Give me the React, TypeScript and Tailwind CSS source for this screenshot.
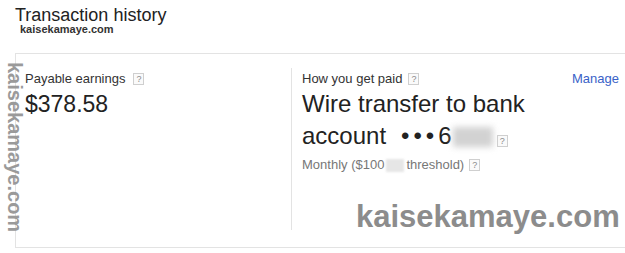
import React from "react";

function Q({ className = "" }: { className?: string }) {
  return (
    <span
      className={
        "inline-flex w-[11px] h-[12px] border border-[#cfcfcf] bg-[#fafafa] text-[9px] leading-none text-[#8a8a8a] items-center justify-center " +
        className
      }
    >
      ?
    </span>
  );
}

export default function App() {
  return (
    <div className="relative w-[625px] h-[253px] overflow-hidden bg-white font-['Liberation_Sans',Arial,sans-serif] text-[#222]">
      <div className="pt-[7px] pl-[15px] text-[18px] leading-[17px] text-[#222]">Transaction history</div>

      <div className="mt-[29px] ml-[15px] h-[195px] border-t border-l border-b border-[#e3e3e3] flex pt-[14px]">
        <div className="w-[275px] pl-[9px] pt-[3px]">
          <div className="flex items-center text-[13px] leading-[16px] text-[#333]">
            <span>Payable earnings</span>
            <Q className="ml-[8px]" />
          </div>
          <div className="mt-[3px] text-[23px] leading-[28px] text-[#222]">$378.58</div>
        </div>

        <div className="flex-1 h-[162px] border-l border-[#e3e3e3] pl-[10px] pr-[6px] pt-[3px]">
          <div className="flex items-center justify-between text-[13px] leading-[16px]">
            <div className="flex items-center text-[#333]">
              <span>How you get paid</span>
              <Q className="ml-[6px]" />
            </div>
            <span className="text-[#3a62c8]">Manage</span>
          </div>
          <div className="mt-[1px] text-[24px] leading-[32px] text-[#222]">
            <div>Wire transfer to bank</div>
            <div className="flex items-center">
              <span>account</span>
              <span className="ml-[15px] tracking-[4px]">•••</span>
              <span>6</span>
              <span className="ml-[1px] mt-[2px] w-[40px] h-[20px] bg-[#d2d2d2] blur-[3px]" />
              <Q className="ml-[4px] mt-[10px]" />
            </div>
          </div>
          <div className="mt-[5px] flex items-center text-[13px] leading-[16px] text-[#777]">
            <span>Monthly ($100</span>
            <span className="mx-[2px] w-[18px] h-[13px] bg-[#e6e6e6] blur-[1px]" />
            <span>threshold)</span>
            <Q className="ml-[5px]" />
          </div>
        </div>
      </div>

      <div className="absolute left-[20px] top-[24px] text-[11px] leading-[11px] font-bold text-[#333]">kaisekamaye.com</div>

      <div className="absolute left-[4px] top-[62px] text-[20px] leading-[22px] font-bold text-[#9a9a9a] [writing-mode:vertical-rl]">
        kaisekamaye.com
      </div>

      <div className="absolute left-[356px] top-[199px] text-[31px] leading-[36px] font-bold text-[#8c8c8c]">
        kaisekamaye.com
      </div>
    </div>
  );
}
